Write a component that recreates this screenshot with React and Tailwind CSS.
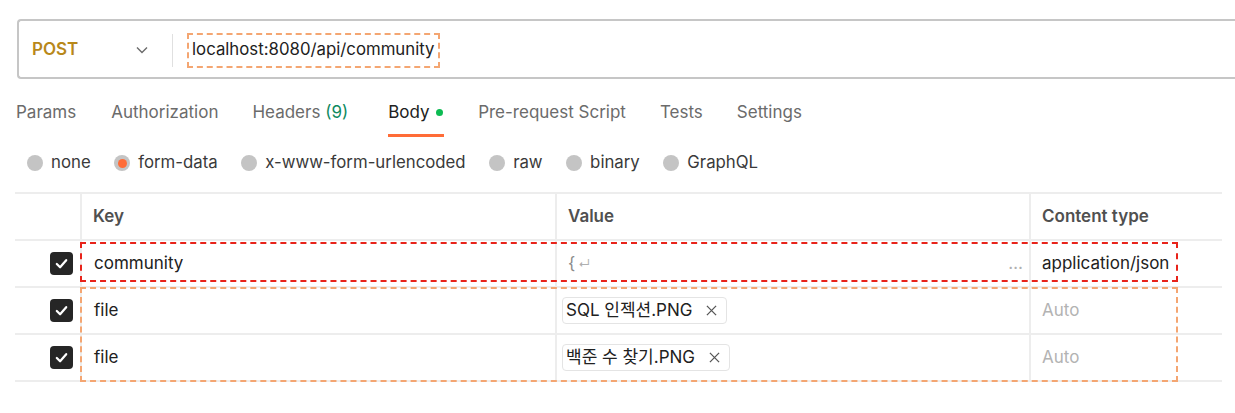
import React from "react";

const font = { fontFamily: "Inter, 'Noto Sans CJK KR', sans-serif" };

function Check() {
  return (
    <div className="w-[23px] h-[23px] rounded-[4px] bg-[#262626] flex items-center justify-center">
      <svg width="15" height="15" viewBox="0 0 16 16" fill="none">
        <path d="M3 8.5 L6.5 12 L13 4.5" stroke="white" strokeWidth="2.4" strokeLinecap="round" strokeLinejoin="round" />
      </svg>
    </div>
  );
}

function Radio({ label, active }) {
  return (
    <div className="flex items-center gap-[8px]">
      <div className="w-[16px] h-[16px] rounded-full bg-[#c4c4c4] flex items-center justify-center">
        {active && <div className="w-[9px] h-[9px] rounded-full bg-[#ff6c37]" />}
      </div>
      <span className="text-[16.8px] text-[#3a3a3a]">{label}</span>
    </div>
  );
}

function Chip({ name }) {
  return (
    <div className="inline-flex items-center h-[27px] pl-[3px] pr-[9px] border border-[#e4e4e4] rounded-[4px] text-[17px] text-[#212121]">
      <span>{name}</span>
      <svg className="ml-[14px]" width="11" height="11" viewBox="0 0 12 12">
        <path d="M1 1 L11 11 M11 1 L1 11" stroke="#555" strokeWidth="1.4" />
      </svg>
    </div>
  );
}

export default function App() {
  return (
    <div className="w-[1235px] h-[413px] bg-white overflow-hidden relative" style={font}>
      {/* URL bar */}
      <div className="pt-[19px] pl-[17px]">
        <div className="h-[60px] border-y-2 border-l-2 border-[#c6c6c6] rounded-l-[4px] flex items-center pt-[2px]">
          <div className="w-[153px] flex items-center justify-between pl-[13px] pr-[24px]">
            <span className="text-[17px] font-semibold text-[#b8881a]">POST</span>
            <svg width="12" height="8" viewBox="0 0 12 8" fill="none">
              <path d="M1 1.5 L6 6.5 L11 1.5" stroke="#6b6b6b" strokeWidth="1.4" />
            </svg>
          </div>
          <div className="w-px h-[33px] bg-[#e0e0e0]" />
          <div className="ml-[14px] h-[35px] border-2 border-dashed border-[#f4a672] flex items-center px-[3px]">
            <span className="text-[16.8px] text-[#212121]">localhost:8080/api/community</span>
          </div>
        </div>
      </div>

      {/* Tabs */}
      <div className="flex items-start h-[56px] pt-[21px] pl-[16px] text-[17px] text-[#6b6b6b]">
        <span className="mr-[35px]">Params</span>
        <span className="mr-[34px]">Authorization</span>
        <span className="mr-[40px]">
          Headers <span className="text-[#0f8a5f]">(9)</span>
        </span>
        <div className="mr-[34px] flex flex-col">
          <div className="flex items-center text-[#212121]">
            Body
            <span className="ml-[6px] w-[7px] h-[7px] rounded-full bg-[#0cbb52]" />
          </div>
          <div className="mt-[8px] h-[3px] bg-[#ff6c37] w-[56px]" />
        </div>
        <span className="mr-[34px]">Pre-request Script</span>
        <span className="mr-[34px]">Tests</span>
        <span>Settings</span>
      </div>

      {/* Radios */}
      <div className="flex items-center h-[26px] pl-[27px] gap-[23.5px] mt-[15px]">
        <Radio label="none" />
        <Radio label="form-data" active />
        <Radio label="x-www-form-urlencoded" />
        <Radio label="raw" />
        <Radio label="binary" />
        <Radio label="GraphQL" />
      </div>

      {/* Table */}
      <div className="ml-[15px] mt-[16px] w-[1207px] relative text-[17px]">
        <div className="grid grid-cols-[65px_475px_474px_193px] border-t-2 border-[#ededed]">
          {/* header */}
          <div className="h-[47px] border-b-2 border-[#ededed]" />
          <div className="h-[47px] border-b-2 border-l-2 border-[#ededed] flex items-center pl-[11px] font-semibold text-[#505050]">Key</div>
          <div className="h-[47px] border-b-2 border-l-2 border-[#ededed] flex items-center pl-[11px] font-semibold text-[#505050]">Value</div>
          <div className="h-[47px] border-b-2 border-l-2 border-[#ededed] flex items-center pl-[11px] font-semibold text-[#505050]">Content type</div>

          {/* row 1 */}
          <div className="h-[47px] border-b-2 border-[#ededed] flex items-center justify-end pr-[7px]"><Check /></div>
          <div className="h-[47px] border-b-2 border-l-2 border-[#ededed] flex items-center pl-[12px] text-[#212121]">community</div>
          <div className="h-[47px] border-b-2 border-l-2 border-[#ededed] flex items-center pl-[11px] pr-[6px] text-[#8a8a8a]">
            <span>{"{"}</span>
            <span className="ml-[3px] text-[12px] text-[#b0b0b0]">↵</span>
            <span className="ml-auto text-[#b0b0b0]">…</span>
          </div>
          <div className="h-[47px] border-b-2 border-l-2 border-[#ededed] flex items-center pl-[11px] text-[#212121]">application/json</div>

          {/* row 2 */}
          <div className="h-[47px] border-b-2 border-[#ededed] flex items-center justify-end pr-[7px]"><Check /></div>
          <div className="h-[47px] border-b-2 border-l-2 border-[#ededed] flex items-center pl-[12px] text-[#212121]">file</div>
          <div className="h-[47px] border-b-2 border-l-2 border-[#ededed] flex items-center pl-[5px]"><Chip name="SQL 인젝션.PNG" /></div>
          <div className="h-[47px] border-b-2 border-l-2 border-[#ededed] flex items-center pl-[11px] text-[#b3b3b3]">Auto</div>

          {/* row 3 */}
          <div className="h-[47px] border-b-2 border-[#ededed] flex items-center justify-end pr-[7px]"><Check /></div>
          <div className="h-[47px] border-b-2 border-l-2 border-[#ededed] flex items-center pl-[12px] text-[#212121]">file</div>
          <div className="h-[47px] border-b-2 border-l-2 border-[#ededed] flex items-center pl-[5px]"><Chip name="백준 수 찾기.PNG" /></div>
          <div className="h-[47px] border-b-2 border-l-2 border-[#ededed] flex items-center pl-[11px] text-[#b3b3b3]">Auto</div>
        </div>

        {/* highlight overlays */}
        <div className="absolute left-[65px] top-[50px] w-[1098px] h-[40px] border-2 border-dashed border-[#e8231a] pointer-events-none" />
        <div className="absolute left-[65px] top-[95px] w-[1098px] h-[95px] border-2 border-dashed border-[#f4a672] pointer-events-none" />
      </div>
    </div>
  );
}
